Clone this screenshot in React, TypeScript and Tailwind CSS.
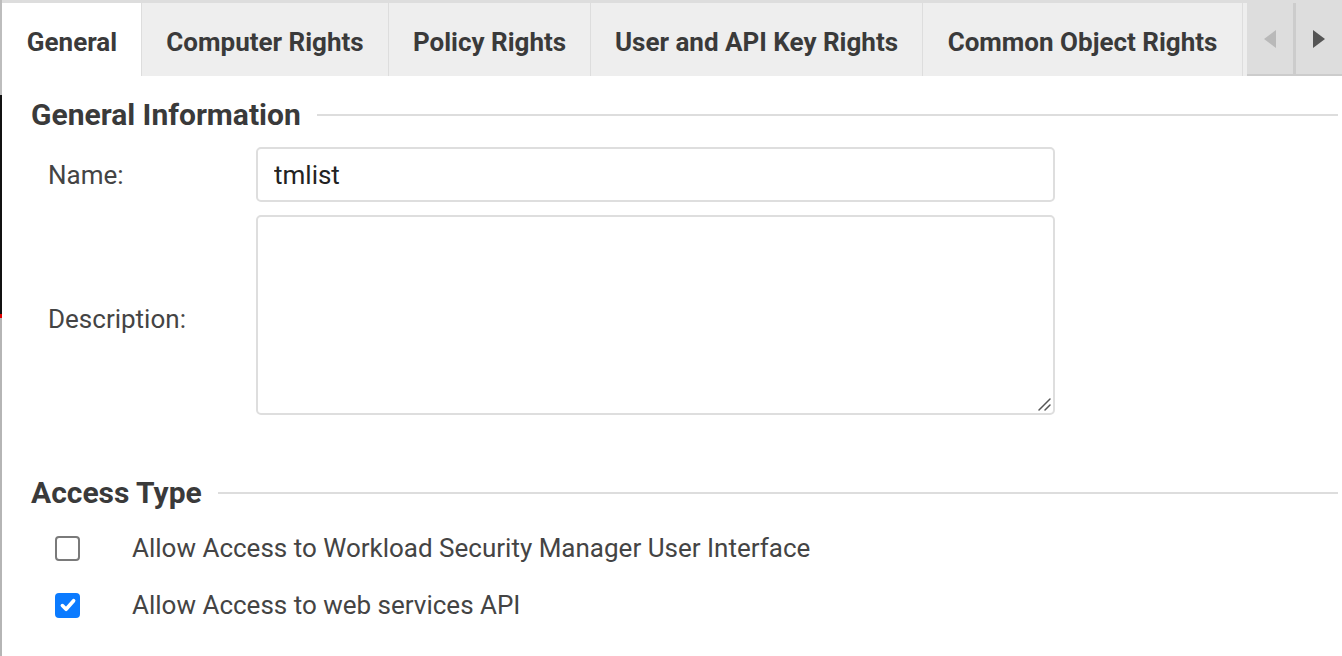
import React from "react";

const tabs = [
  { label: "General", w: "w-[138px]", active: true },
  { label: "Computer Rights", w: "w-[247px]" },
  { label: "Policy Rights", w: "w-[202px]" },
  { label: "User and API Key Rights", w: "w-[332px]" },
  { label: "Common Object Rights", w: "w-[320px]" },
];

function Heading({ text }: { text: string }) {
  return (
    <div className="flex items-center pl-[2px]">
      <span className="text-[30px] font-bold text-[#3a3a3a] leading-none">{text}</span>
      <div className="flex-1 h-[2px] bg-[#dddddd] ml-[16px] mr-[4px]" />
    </div>
  );
}

function Checkbox({ checked }: { checked?: boolean }) {
  if (checked) {
    return (
      <div className="w-[25px] h-[25px] rounded-[4px] bg-[#0b7bff] flex items-center justify-center">
        <svg width="18" height="18" viewBox="0 0 16 16">
          <path d="M3 8.5 L6.3 11.8 L13 4.2" fill="none" stroke="white" strokeWidth="3.2" strokeLinecap="round" strokeLinejoin="round" />
        </svg>
      </div>
    );
  }
  return <div className="w-[25px] h-[25px] rounded-[4px] border-2 border-[#7a7a7a] bg-white" />;
}

export default function App() {
  return (
    <div className="w-[1342px] h-[656px] flex bg-white overflow-hidden font-['Roboto',sans-serif]">
      {/* left window edge */}
      <div className="w-[2px] flex flex-col shrink-0">
        <div className="h-[95px] bg-[#bdbdbd]" />
        <div className="h-[219px] bg-[#111111]" />
        <div className="h-[4px] bg-[#e00000]" />
        <div className="flex-1 bg-[#b5b5b5]" />
      </div>
      <div className="flex-1 flex flex-col">
        {/* tab bar */}
        <div className="flex flex-col bg-[#dddddd]">
          <div className="h-[3px]" />
          <div className="flex h-[73px] items-stretch">
            <div className="w-[1px] bg-white" />
            {tabs.map((t) => (
              <div
                key={t.label}
                className={`${t.w} flex items-center justify-center pt-[5px] text-[26px] font-bold text-[#3a3a3a] ${
                  t.active ? "bg-white" : "bg-[#eeeeee] border-l border-[#dddddd]"
                }`}
              >
                {t.label}
              </div>
            ))}
            <div className="w-[5px] bg-[#eeeeee] border-l border-[#dddddd]" />
            <div className="flex-1 flex gap-[3px] bg-[#cccccc] border-b-2 border-[#cccccc]">
              <div className="flex-1 bg-[#dddddd] flex items-center justify-center">
                <svg width="14" height="20" viewBox="0 0 14 20">
                  <path d="M13 1 L1 10 L13 19 Z" fill="#b9b9b9" />
                </svg>
              </div>
              <div className="flex-1 bg-[#dddddd] flex items-center justify-center">
                <svg width="14" height="20" viewBox="0 0 14 20">
                  <path d="M1 1 L13 10 L1 19 Z" fill="#555555" />
                </svg>
              </div>
            </div>
          </div>
        </div>

        {/* content */}
        <div className="flex flex-col pl-[27px] pt-[24px]">
          <Heading text="General Information" />
          <div className="flex flex-col pl-[19px] pt-[17px] gap-[13px]">
            <div className="flex items-center">
              <div className="w-[208px] text-[26px] text-[#444444] pt-[1px]">Name:</div>
              <input
                readOnly
                value="tmlist"
                className="w-[799px] h-[55px] border-2 border-[#dedede] rounded-[5px] px-[16px] text-[26px] text-[#222222] outline-none"
              />
            </div>
            <div className="flex items-center">
              <div className="w-[208px] text-[26px] text-[#444444] pt-[8px]">Description:</div>
              <div className="relative">
                <textarea
                  readOnly
                  className="block w-[799px] h-[200px] border-2 border-[#dedede] rounded-[5px] px-[16px] text-[26px] text-[#222222] outline-none resize-none"
                />
                <svg className="absolute right-[4px] bottom-[4px]" width="14" height="14" viewBox="0 0 14 14">
                  <path d="M2 13 L13 2 M8 13 L13 8" stroke="#555555" strokeWidth="1.5" strokeLinecap="round" />
                </svg>
              </div>
            </div>
          </div>
          <div className="pt-[63px]">
            <Heading text="Access Type" />
          </div>
          <div className="flex flex-col pl-[26px] pt-[27px] gap-[31px]">
            <div className="flex items-center">
              <Checkbox />
              <span className="ml-[52px] text-[26px] text-[#444444] leading-none">
                Allow Access to Workload Security Manager User Interface
              </span>
            </div>
            <div className="flex items-center">
              <Checkbox checked />
              <span className="ml-[52px] text-[26px] text-[#444444] leading-none">
                Allow Access to web services API
              </span>
            </div>
          </div>
        </div>
      </div>
    </div>
  );
}
